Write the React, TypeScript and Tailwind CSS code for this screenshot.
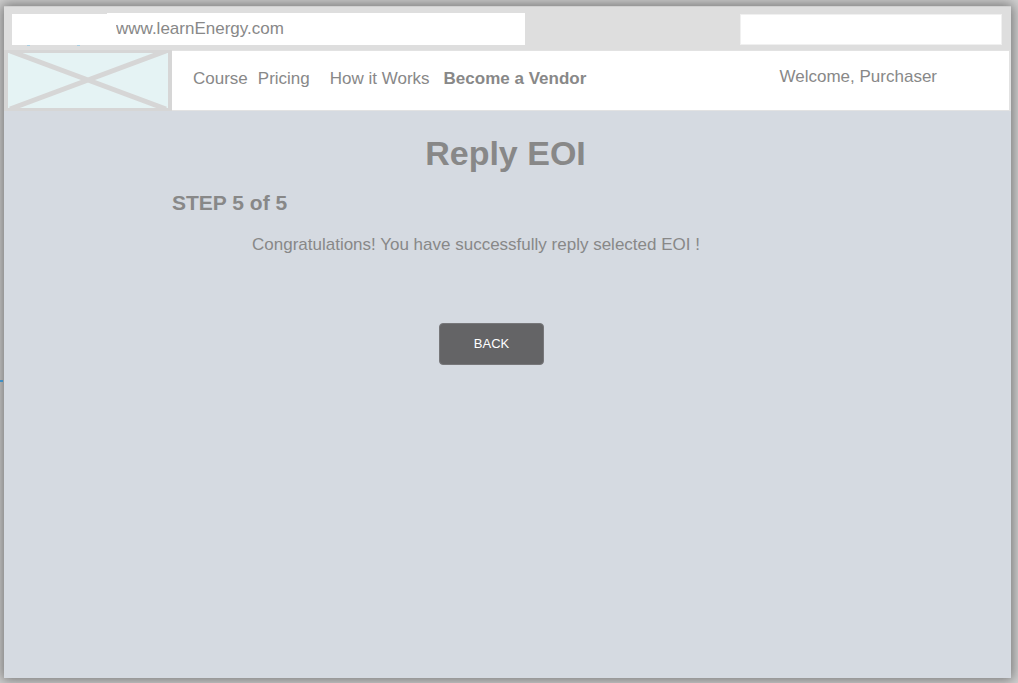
const links = [
  { label: "Course", className: "" },
  { label: "Pricing", className: "ml-2.5" },
  { label: "How it Works", className: "ml-5" },
  { label: "Become a Vendor", className: "ml-3.5 font-bold" },
];

function BrowserBar() {
  return (
    <div className="flex h-11 items-start justify-between border-t border-[#d0d0d0] bg-[#dedede] pr-[9px] pl-2 pt-1.5">
      <div className="flex w-[513px] items-start">
        <div className="relative mt-px h-[31px] w-[95px] shrink-0 bg-white">
          <span className="absolute -bottom-px left-[15px] h-px w-[3px] bg-[#a9cfe3]" />
          <span className="absolute -bottom-px left-[65px] h-px w-[3px] bg-[#a9cfe3]" />
        </div>
        <input
          type="text"
          aria-label="Address"
          defaultValue="www.learnEnergy.com"
          className="h-8 min-w-0 flex-1 bg-white pl-[9px] outline-none"
        />
      </div>
      <input
        type="search"
        aria-label="Search"
        className="mt-px h-[31px] w-[262px] border border-[#f0f0f0] bg-white px-2 outline-none"
      />
    </div>
  );
}

function Logo() {
  return (
    <a href="#home" aria-label="Home" className="block h-[61px] w-[168px] shrink-0">
      <svg viewBox="0 0 168 61" className="block h-full w-full">
        <rect width="168" height="61" fill="#d6d6d6" />
        <rect x="4" y="3" width="160" height="55" fill="#e5f3f4" />
        <path d="M6 1L162 59M162 1L6 59" stroke="#d6d6d6" strokeWidth="5" />
        <path d="M0 0H168V61H0ZM4 3V58H164V3Z" fill="#d6d6d6" fillRule="evenodd" />
      </svg>
    </a>
  );
}

export default function App() {
  return (
    <div className="relative flex min-h-screen flex-col bg-[#d2d2d2] pt-1.5 pr-[7px] pb-[5px] pl-1 font-['Liberation_Sans',Arial,sans-serif] text-[17px] leading-5 text-[#888888]">
      <div className="flex flex-1 flex-col bg-[#d5dae1] shadow-[0_0_12px_2px_rgba(0,0,0,0.45)]">
        <BrowserBar />
        <header className="flex bg-[#e2e2e2]">
          <Logo />
          <div className="mt-px mr-0.5 mb-px flex flex-1 items-start bg-white pr-[72px] pl-[21px]">
            <nav className="flex pt-[18px] whitespace-nowrap">
              {links.map((link) => (
                <a key={link.label} href="#" className={link.className}>
                  {link.label}
                </a>
              ))}
            </nav>
            <p className="ml-auto pt-4 whitespace-nowrap">Welcome, Purchaser</p>
          </div>
        </header>
        <main className="flex-1 px-[168px] pt-[22px]">
          <h1 className="pr-1 text-center text-[34px] leading-10 font-bold">Reply EOI</h1>
          <h2 className="mt-[18px] text-[21px] leading-6 font-bold">STEP 5 of 5</h2>
          <p className="mt-5 pl-20">Congratulations! You have successfully reply selected EOI !</p>
          <div className="mt-[68px] flex justify-center pr-8">
            <button
              type="button"
              className="h-[42px] w-[105px] rounded border border-[#77777a] bg-[#646466] text-[13px] text-white"
            >
              BACK
            </button>
          </div>
        </main>
      </div>
      <span className="absolute top-[380px] left-0 h-0.5 w-[3px] bg-[#3f8fc4]" />
    </div>
  );
}
